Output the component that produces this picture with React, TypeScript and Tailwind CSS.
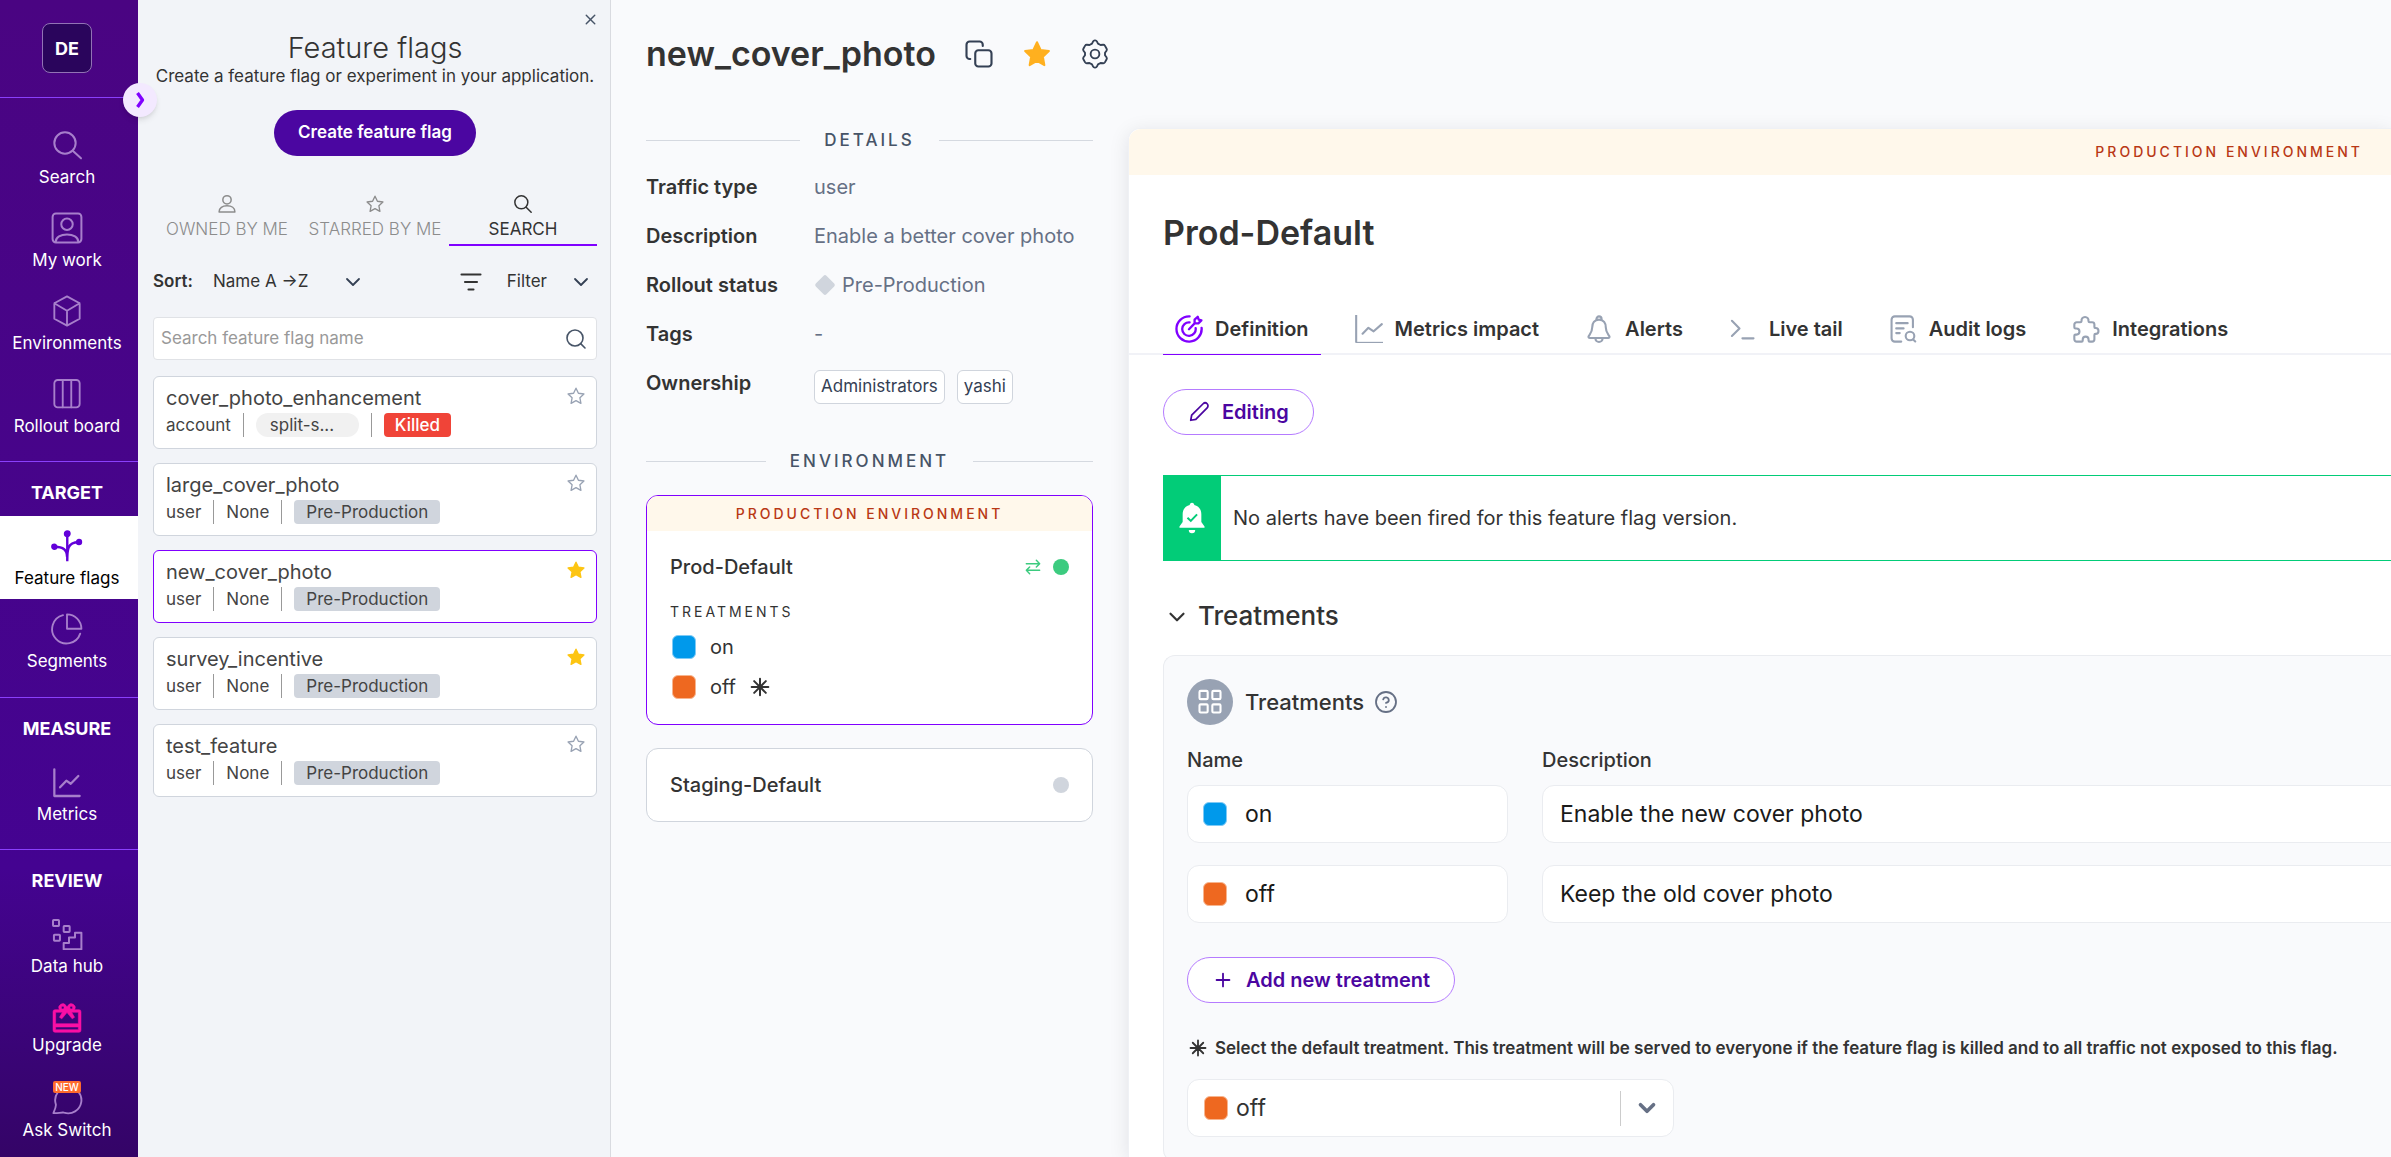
import type { ReactNode } from "react";
import { ChevronDown, Plus, Search, X } from "lucide-react";

type IconProps = { className?: string; children?: ReactNode; box?: string; width?: number };

function Icon({ className = "size-8", children, box = "0 0 24 24", width = 1.5 }: IconProps) {
  return (
    <svg
      className={className}
      viewBox={box}
      fill="none"
      stroke="currentColor"
      strokeWidth={width}
      strokeLinecap="round"
      strokeLinejoin="round"
      aria-hidden="true"
    >
      {children}
    </svg>
  );
}

const STAR = "M12 2.6l2.9 6.1 6.6.9-4.8 4.6 1.2 6.7-5.9-3.3-5.9 3.3 1.2-6.7L2.5 9.6l6.6-.9z";

function Star({ className, filled }: { className: string; filled?: boolean }) {
  return (
    <Icon className={className} width={1.6}>
      <path d={STAR} fill={filled ? "currentColor" : "none"} />
    </Icon>
  );
}

function Asterisk({ className = "size-5 text-[#333333]" }: { className?: string }) {
  return (
    <Icon className={className} width={2.4}>
      <path d="M12 2v20M2 12h20M5 5l14 14M19 5L5 19" />
    </Icon>
  );
}

function Swatch({ color }: { color: "blue" | "orange" }) {
  return (
    <span
      className={
        color === "blue"
          ? "size-6 shrink-0 rounded-md border border-[#7fcaf5] bg-[#0099eb]"
          : "size-6 shrink-0 rounded-md border border-[#f7b58f] bg-[#ee6820]"
      }
    />
  );
}

/* ---------- Navigation ---------- */

const navIcon = "size-8 text-[#a77fcb]";

function NavItem({ label, icon, active }: { label: string; icon: ReactNode; active?: boolean }) {
  return (
    <a
      href="#"
      aria-current={active ? "page" : undefined}
      className={
        active
          ? "flex h-[83px] flex-col items-center bg-white pt-3.5 pr-1 text-black"
          : "flex h-[83px] flex-col items-center pt-3.5 pr-1 text-white"
      }
    >
      {icon}
      <span className="mt-1 text-[17px] leading-6">{label}</span>
    </a>
  );
}

function NavHeading({ children }: { children: ReactNode }) {
  return (
    <h2 className="border-t border-[#8a3ffc] pt-[19px] pr-1 pb-[11px] text-center text-[18px] leading-6 font-bold text-white">
      {children}
    </h2>
  );
}

function Sidebar() {
  return (
    <nav
      aria-label="Main"
      className="relative z-10 w-[138px] shrink-0 bg-linear-to-b from-[#4a0482] via-[#440391] via-75% to-[#340467]"
    >
      <div className="flex h-[98px] items-start justify-center border-b border-[#8a3ffc] pt-[23px]">
        <button
          type="button"
          className="mr-1 size-[50px] rounded-lg border border-[#9273b5] bg-[#2a055c] text-[18px] font-bold text-white"
        >
          DE
        </button>
      </div>
      <button
        type="button"
        aria-label="Expand navigation"
        className="absolute top-[83px] left-[123px] flex size-[34px] items-center justify-center rounded-full bg-[#f3e9ff] text-[#8000ff] shadow-md"
      >
        <Icon className="size-5" width={4}>
          <path d="M9 3.500l6 8.500-6 8.500" strokeLinecap="butt" />
        </Icon>
      </button>

      <div className="pt-[17px] pb-3.5">
        <NavItem label="Search" icon={<Icon className={navIcon}><circle cx="10.500" cy="10.500" r="8" /><path d="M16.300 16.300L22.500 22" /></Icon>} />
        <NavItem
          label="My work"
          icon={
            <Icon className={navIcon}>
              <rect x="1.200" y="1.200" width="21.600" height="21.600" rx="2.500" />
              <circle cx="12" cy="9.200" r="4.300" />
              <path d="M3.500 22.500c0-3.500 3.800-5.700 8.500-5.700s8.500 2.200 8.500 5.700" />
            </Icon>
          }
        />
        <NavItem
          label="Environments"
          icon={
            <Icon className={navIcon} width={1.4}>
              <path d="M12 1l9.500 5.200v11.600L12 23l-9.500-5.200V6.200zM2.500 6.200L12 11.800l9.500-5.600M12 11.800V23" />
            </Icon>
          }
        />
        <NavItem
          label="Rollout board"
          icon={
            <Icon className={navIcon} width={1.4}>
              <rect x="2.500" y="1.500" width="19" height="20.500" rx="2.500" />
              <path d="M8.800 1.500V22M15.200 1.500V22" />
            </Icon>
          }
        />
      </div>
      <NavHeading>TARGET</NavHeading>
      <div className="pb-[15px]">
        <NavItem
          active
          label="Feature flags"
          icon={
            <Icon className="size-8 text-[#6200d9]" width={1.8}>
              <path d="M12.200 3v20.500M12.200 23c0-8 0-13.800 8.500-13.800M12 20c0-5-2.500-7.400-9.500-7.400" strokeLinecap="butt" />
              <circle cx="12.200" cy="2.800" r="1.700" fill="currentColor" />
              <circle cx="21" cy="9" r="1.500" fill="currentColor" />
              <circle cx="2.500" cy="12.600" r="1.500" fill="currentColor" />
            </Icon>
          }
        />
        <NavItem
          label="Segments"
          icon={
            <Icon className={navIcon} width={1.4}>
              <path d="M9 1.600A10.800 10.800 0 1 0 21.900 15.500M12 1a10.800 10.800 0 0 1 10.800 10.800H12z" />
            </Icon>
          }
        />
      </div>
      <NavHeading>MEASURE</NavHeading>
      <div className="pb-3.5">
        <NavItem
          label="Metrics"
          icon={
            <Icon className={navIcon} width={1.7}>
              <path d="M2.500 2.500v20h19M6.800 16l4.700-5 3.300 2.300 5.700-5.800" />
            </Icon>
          }
        />
      </div>
      <NavHeading>REVIEW</NavHeading>
      <NavItem
        label="Data hub"
        icon={
          <Icon className={navIcon} width={1.5}>
            <rect x="1.500" y="1.500" width="4.500" height="4.500" rx=".5" />
            <rect x="9.500" y="6" width="4.500" height="4.500" rx=".5" />
            <rect x="2.200" y="12.500" width="4.500" height="4.500" rx=".5" />
            <path d="M22.800 11v12.500H9.500v-4.800h4v-4h4.500V11z" />
          </Icon>
        }
      />
      <a href="#" className="flex h-[83px] flex-col items-center pt-3.5 pr-1 text-white">
        <svg className="size-8 text-[#fa0fa5]" viewBox="0 0 24 24" fill="currentColor" stroke="currentColor" strokeWidth=".4" aria-hidden="true">
          <path d="M21 6.500h-3.300a2.900 2.900 0 0 0-5-3.100L12 4.300l-.7-.9a2.900 2.900 0 0 0-5 3.100H3A1.500 1.500 0 0 0 1.500 8v14A1.500 1.500 0 0 0 3 23.500h18a1.500 1.500 0 0 0 1.500-1.500V8A1.500 1.500 0 0 0 21 6.500zM15.200 4a1 1 0 1 1 0 2 1 1 0 0 1 0-2zM8.800 4a1 1 0 1 1 0 2 1 1 0 0 1 0-2zM20.500 21.500h-17v-2h17zm0-4.500h-17V8.500h5l-2.200 3.700 1.800 1.200L12 8.700l3.900 4.700 1.800-1.200-2.200-3.700h5z" />
        </svg>
        <span className="text-[17px] leading-6">Upgrade</span>
      </a>
      <a href="#" className="flex flex-col items-center pr-1 text-white">
        <span className="relative flex h-[46px] justify-center pt-3.5">
          <Icon className={navIcon} width={1.4}>
            <path d="M12.800 2.200a9.900 9.900 0 1 1-3 19.300c-1.200-.5-5.600.7-8 .3 1-2.200 2.200-4.700 1.800-6.600A10 10 0 0 1 12.800 2.200z" />
          </Icon>
          <span className="absolute top-[11px] rounded-xs bg-[#ff6b2c] px-0.5 text-[10px] leading-3 font-medium text-white">
            NEW
          </span>
        </span>
        <span className="mt-0.5 text-[17px] leading-6">Ask Switch</span>
      </a>
    </nav>
  );
}

/* ---------- Feature flag list ---------- */

type Flag = { name: string; type: string; tag: string; status: "Killed" | "Pre-Production"; starred?: boolean; active?: boolean };

const flags: Flag[] = [
  { name: "cover_photo_enhancement", type: "account", tag: "split-s...", status: "Killed" },
  { name: "large_cover_photo", type: "user", tag: "None", status: "Pre-Production" },
  { name: "new_cover_photo", type: "user", tag: "None", status: "Pre-Production", starred: true, active: true },
  { name: "survey_incentive", type: "user", tag: "None", status: "Pre-Production", starred: true },
  { name: "test_feature", type: "user", tag: "None", status: "Pre-Production" },
];

function FlagCard({ flag }: { flag: Flag }) {
  return (
    <li
      className={
        flag.active
          ? "flex h-[73px] justify-between rounded-md border border-[#8000ff] bg-white pt-[7px] pr-2.5 pl-3"
          : "flex h-[73px] justify-between rounded-md border border-[#d0d5dd] bg-white pt-[7px] pr-2.5 pl-3"
      }
    >
      <div>
        <a href="#" className="block text-[20px] leading-7 text-[#444444]">{flag.name}</a>
        <div className="mt-px flex h-6 items-center gap-3 text-[17px] leading-6 text-[#444444]">
          <span>{flag.type}</span>
          <span className="h-6 w-px bg-[#999999]" />
          {flag.status === "Killed" ? (
            <span className="w-[103px] rounded-full bg-[#f1f1f1] pl-3.5">{flag.tag}</span>
          ) : (
            <span>{flag.tag}</span>
          )}
          <span className="h-6 w-px bg-[#999999]" />
          {flag.status === "Killed" ? (
            <span className="rounded-sm bg-[#f04438] px-[11px] font-medium text-white">Killed</span>
          ) : (
            <span className="rounded-sm bg-[#d0d5dd] px-3">Pre-Production</span>
          )}
        </div>
      </div>
      <button type="button" aria-label={`Star ${flag.name}`} className="h-5">
        <Star filled={flag.starred} className={flag.starred ? "mt-0.5 size-5 text-[#fdc513]" : "mt-0.5 size-5 text-[#98a2b3]"} />
      </button>
    </li>
  );
}

function FlagPanel() {
  return (
    <aside className="flex w-[473px] shrink-0 flex-col border-r border-[#d9dbe0] bg-[#f2f4f8] pr-[13px] pl-[15px] text-[#333333]">
      <div className="flex h-8 items-end justify-end pb-1">
        <button type="button" aria-label="Close panel">
          <X className="-mr-0.5 size-[17px] text-[#475467]" />
        </button>
      </div>
      <div className="text-center">
        <h1 className="text-[29px] leading-8 font-light">Feature flags</h1>
        <p className="text-[17px] leading-6 whitespace-nowrap">Create a feature flag or experiment in your application.</p>
        <button type="button" className="mt-[22px] h-[46px] rounded-full bg-[#4b06a1] px-6 text-[17px] font-semibold text-white">
          Create feature flag
        </button>
      </div>

      <div role="tablist" aria-label="Flag lists" className="mt-[38px] grid grid-cols-3 text-[17px] leading-6 font-light whitespace-nowrap">
        <button type="button" role="tab" aria-selected="false" className="flex flex-col items-center gap-[3px] border-b-2 border-transparent pb-[3px] text-[#8c8c8c]">
          <Icon className="size-5" width={1.8}>
            <circle cx="12" cy="7" r="5" />
            <path d="M2.500 21.500c0-5 4-7.300 9.500-7.300s9.500 2.300 9.500 7.300z" />
          </Icon>
          OWNED BY ME
        </button>
        <button type="button" role="tab" aria-selected="false" className="flex flex-col items-center gap-[3px] border-b-2 border-transparent pb-[3px] text-[#8c8c8c]">
          <Star className="size-5" />
          STARRED BY ME
        </button>
        <button type="button" role="tab" aria-selected="true" className="flex flex-col items-center gap-[3px] border-b-2 border-[#8000ff] pb-[3px] font-normal">
          <Icon className="size-5" width={1.8}>
            <circle cx="10" cy="10" r="7.800" />
            <path d="M15.800 15.800l6 6" />
          </Icon>
          SEARCH
        </button>
      </div>

      <div className="mt-[22px] flex h-7 items-center text-[17px]">
        <label htmlFor="sort" className="w-[60px] font-semibold">Sort:</label>
        <div className="relative flex items-center">
          <select id="sort" className="w-[152px] appearance-none bg-transparent">
            <option>Name A →Z</option>
            <option>Name Z →A</option>
          </select>
          <ChevronDown className="pointer-events-none absolute right-0 size-6 text-[#344054]" strokeWidth={1.8} />
        </div>
        <button type="button" className="ml-auto flex items-center pr-1">
          <Icon className="size-6" width={2.1}>
            <path d="M2.500 4.500h19M6 12h12M9.500 19.500h5" />
          </Icon>
          <span className="ml-6">Filter</span>
          <ChevronDown className="ml-[22px] size-6 text-[#344054]" strokeWidth={1.8} />
        </button>
      </div>

      <div className="mt-[21px] flex h-[43px] shrink-0 items-center rounded-sm border border-[#e0e2e6] bg-white pr-2 pl-[7px]">
        <input
          type="text"
          aria-label="Search feature flag name"
          placeholder="Search feature flag name"
          className="w-full bg-transparent text-[17px] outline-none placeholder:text-[#999999]"
        />
        <Search className="size-6 shrink-0 text-[#475467]" strokeWidth={1.6} />
      </div>

      <ul className="mt-4 flex flex-col gap-3.5">
        {flags.map((flag) => (
          <FlagCard key={flag.name} flag={flag} />
        ))}
      </ul>
    </aside>
  );
}

/* ---------- Details column ---------- */

function SectionRule({ children }: { children: ReactNode }) {
  return (
    <div className="flex h-6 items-center gap-6">
      <span className="h-px flex-1 bg-[#d5d9e0]" />
      <h2 className="text-[17px] leading-6 font-medium tracking-[3px] text-[#475467]">{children}</h2>
      <span className="h-px flex-1 bg-[#d5d9e0]" />
    </div>
  );
}

function DetailRow({ label, children }: { label: string; children: ReactNode }) {
  return (
    <div className="flex h-[49px] items-center">
      <dt className="w-[168px] font-semibold text-[#333333]">{label}</dt>
      <dd className="flex items-center text-[#667085]">{children}</dd>
    </div>
  );
}

function DetailsColumn() {
  return (
    <section className="w-[447px] shrink-0">
      <SectionRule>DETAILS</SectionRule>
      <dl className="mt-2.5 text-[20px] whitespace-nowrap">
        <DetailRow label="Traffic type">user</DetailRow>
        <DetailRow label="Description">Enable a better cover photo</DetailRow>
        <DetailRow label="Rollout status">
          <svg className="mr-1.5 size-[22px] text-[#d0d5dd]" viewBox="0 0 22 22" aria-hidden="true">
            <rect x="3.500" y="3.500" width="15" height="15" rx="2" fill="currentColor" transform="rotate(45 11 11)" />
          </svg>
          Pre-Production
        </DetailRow>
        <DetailRow label="Tags">-</DetailRow>
        <DetailRow label="Ownership">
          <span className="flex gap-3 pt-2 text-[17px] text-[#344054]">
            <span className="flex h-[34px] items-center rounded-md border border-[#d0d5dd] bg-white px-1.5">Administrators</span>
            <span className="flex h-[34px] items-center rounded-md border border-[#d0d5dd] bg-white px-1.5">yashi</span>
          </span>
        </DetailRow>
      </dl>

      <div className="mt-[42px]">
        <SectionRule>ENVIRONMENT</SectionRule>
      </div>

      <div className="mt-[22px] h-[230px] overflow-hidden rounded-xl border border-[#8000ff] bg-white text-[#333333]">
        <p className="bg-[#fff8eb] text-center text-[14px] leading-[35px] font-medium tracking-[3px] text-[#b93815]">
          PRODUCTION ENVIRONMENT
        </p>
        <div className="px-[23px]">
          <div className="mt-6 flex items-center">
            <h3 className="text-[20px] leading-6 font-medium">Prod-Default</h3>
            <Icon className="ml-auto size-4 text-[#3ccb7f]" width={2.2}>
              <path d="M2 7h20M17 2l5 5-5 5M22 17H2M7 12l-5 5 5 5" />
            </Icon>
            <span className="ml-3 size-4 rounded-full bg-[#3ccb7f]" />
          </div>
          <h4 className="mt-[21px] text-[14px] leading-6 tracking-[3px]">TREATMENTS</h4>
          <ul className="mt-[11px] flex flex-col gap-4 pl-0.5 text-[20px]">
            <li className="flex h-6 items-center gap-3.5"><Swatch color="blue" />on</li>
            <li className="flex h-6 items-center gap-3.5"><Swatch color="orange" />off<Asterisk /></li>
          </ul>
        </div>
      </div>

      <div className="mt-[23px] flex h-[74px] items-center justify-between rounded-xl border border-[#d0d5dd] bg-white px-[23px]">
        <h3 className="text-[20px] font-medium text-[#333333]">Staging-Default</h3>
        <span className="size-4 rounded-full bg-[#d0d5dd]" />
      </div>
    </section>
  );
}

/* ---------- Environment panel ---------- */

const tabIcon = "size-7 shrink-0 text-[#98a2b3]";

const tabs: { label: string; icon: ReactNode; active?: boolean }[] = [
  {
    label: "Definition",
    active: true,
    icon: (
      <Icon className="size-7 shrink-0 text-[#8000ff]" width={2}>
        <path d="M12.500 1.200A10.800 10.800 0 1 0 22.800 11M12.500 6.300a5.800 5.800 0 1 0 5.200 4.900M12 12.200l5-5.200M16.800 7.200V4l2.700-2.500.8 2.400 2.300.7L20 7.200z" />
      </Icon>
    ),
  },
  {
    label: "Metrics impact",
    icon: (
      <Icon className={tabIcon} width={1.8}>
        <path d="M1 0v23.500" strokeLinecap="butt" />
        <path d="M.5 23.500H24" strokeWidth={1} strokeLinecap="butt" />
        <path d="M6.500 16l5-5 4.500 3L23 7.800" />
      </Icon>
    ),
  },
  {
    label: "Alerts",
    icon: (
      <Icon className={tabIcon} width={1.8}>
        <path d="M9.800 4.200V3.400a2.200 2.200 0 0 1 4.400 0v.8M12 4c-4 0-5.800 3-5.800 6.500 0 4-1.700 5.500-3 7.500-.6 1 0 1.700 1 1.700h15.600c1 0 1.600-.7 1-1.700-1.300-2-3-3.500-3-7.500C17.800 7 16 4 12 4zM9 20.500a3 2.600 0 0 0 6 0" />
      </Icon>
    ),
  },
  { label: "Live tail", icon: <Icon className={tabIcon} width={1.8}><path d="M2.500 5l6.500 6.500L2.500 18M11.500 20H21" /></Icon> },
  {
    label: "Audit logs",
    icon: (
      <Icon className={tabIcon} width={1.8}>
        <path d="M20.500 10.500V4A2.800 2.800 0 0 0 17.700 1.200H5A2.800 2.800 0 0 0 2.200 4v16A2.800 2.800 0 0 0 5 22.800h5.500M6.200 7H16M6.200 11.500h6.300M6.200 15.500h3M20.700 21l1.800 1.700" />
        <circle cx="18" cy="18" r="3.700" />
      </Icon>
    ),
  },
  {
    label: "Integrations",
    icon: (
      <Icon className={tabIcon} width={1.8}>
        <path d="M8.200 5.200a3 3 0 1 1 5.900 0c0 .7.500 1 1.200 1h1.900a2 2 0 0 1 2 2v2c0 .600.400 1 1 1a2.500 2.500 0 0 1 0 5c-.6 0-1 .4-1 1v3.600a2 2 0 0 1-2 2h-2c-.7 0-1-.5-1-1v-.8a2.500 2.500 0 0 0-5 0v.8c0 .5-.4 1-1 1H4a2 2 0 0 1-2-2v-3c0-.700.400-1 1-1h.800a2.600 2.600 0 0 0 0-5.200H3c-.6 0-1-.4-1-1V8.200a2 2 0 0 1 2-2h3c.7 0 1.200-.3 1.200-1z" />
      </Icon>
    ),
  },
];

const field = "flex h-[58px] items-center rounded-xl border border-[#eaecf0] bg-white";

function TreatmentRow({ color, name, description }: { color: "blue" | "orange"; name: string; description: string }) {
  return (
    <>
      <div className={`${field} pl-[15px]`}>
        <Swatch color={color} />
        <input type="text" aria-label={`Name of treatment ${name}`} defaultValue={name} className="ml-[18px] w-full bg-transparent text-[23px] outline-none" />
      </div>
      <div className={`${field} -mr-12 pl-[17px]`}>
        <input type="text" aria-label={`Description of treatment ${name}`} defaultValue={description} className="w-full bg-transparent text-[23px] outline-none" />
      </div>
    </>
  );
}

function EnvironmentPanel() {
  return (
    <section className="ml-[35px] flex min-w-0 flex-1 flex-col rounded-tl-xl border-t border-l border-[#eff1f5] bg-white text-[#333333] shadow-[0_4px_20px_rgba(16,24,40,0.10)]">
      <p className="rounded-tl-xl bg-[#fff8eb] pr-7 text-right text-[14px] leading-[46px] font-medium tracking-[3px] text-[#b93815]">
        PRODUCTION ENVIRONMENT
      </p>
      <h2 className="mt-[35px] pl-[34px] text-[34px] leading-[46px] font-semibold">Prod-Default</h2>

      <div role="tablist" aria-label="Flag sections" className="mt-[47px] flex h-[52px] gap-[22px] border-b-2 border-[#f1f2f7] pl-[34px]">
        {tabs.map((tab) => (
          <button
            key={tab.label}
            type="button"
            role="tab"
            aria-selected={!!tab.active}
            className={
              tab.active
                ? "-mb-0.5 flex h-[52px] items-center gap-3 border-b border-[#8000ff] px-3 text-[20px] font-semibold whitespace-nowrap"
                : "-mb-0.5 flex h-[52px] items-center gap-3 border-b border-transparent px-3 text-[20px] font-semibold whitespace-nowrap"
            }
          >
            {tab.icon}
            {tab.label}
          </button>
        ))}
      </div>

      <div className="pl-[34px]">
        <button type="button" className="mt-[34px] flex h-[46px] items-center gap-3 rounded-full border border-[#b57bff] px-6 text-[20px] font-semibold text-[#4b06a1]">
          <Icon className="size-[22px]" width={1.9}>
            <path d="M3 21l1-5.500L16.500 3a3 3 0 0 1 4.400 4.400L8.500 20z" />
          </Icon>
          Editing
        </button>

        <div role="status" className="mt-10 flex h-[86px] items-center border-y border-[#02cc78] text-[20px]">
          <span className="-my-px flex h-[86px] w-[58px] shrink-0 items-center justify-center bg-[#02cc78]">
            <svg className="size-8" viewBox="0 0 24 24" fill="#fff" aria-hidden="true">
              <path d="M12 .5c1 0 1.700.700 1.700 1.700 3.400.8 5.300 3.600 5.300 7V15l2.400 3.400v1H2.600v-1L5 15V9.200c0-3.400 1.900-6.200 5.300-7 0-1 .7-1.700 1.700-1.700zM9.600 21h4.800a2.400 2.400 0 0 1-4.800 0z" />
              <path d="M8.600 11.800l2.500 2.400 4.700-4.900" fill="none" stroke="#02cc78" strokeWidth="1.500" />
            </svg>
          </span>
          <p className="pl-3">No alerts have been fired for this feature flag version.</p>
        </div>

        <button type="button" aria-expanded="true" className="mt-[39px] flex h-8 items-center gap-2 text-[26px] leading-8 font-medium">
          <ChevronDown className="ml-px size-[26px] translate-y-px" strokeWidth={2} />
          Treatments
        </button>

        <div className="mt-[23px] rounded-tl-xl rounded-bl-xl border border-r-0 border-[#eaecf0] bg-[#f9fafc] px-[23px] pt-[23px] pb-6">
          <div className="flex items-center">
            <span className="flex size-[46px] items-center justify-center rounded-full bg-[#98a2b3] text-white">
              <Icon className="size-7" width={1.8}>
                <rect x="3" y="2.500" width="7" height="7" rx="1" />
                <rect x="14" y="2.500" width="7" height="7" rx="1" />
                <rect x="3" y="14" width="7" height="7" rx="1" />
                <rect x="14" y="14" width="7" height="7" rx="1" />
              </Icon>
            </span>
            <h3 className="ml-3 text-[22px] leading-7 font-medium">Treatments</h3>
            <button type="button" aria-label="About treatments" className="ml-2.5">
              <Icon className="size-6 text-[#667085]" width={1.8}>
                <circle cx="12" cy="12" r="10" />
                <path d="M9.200 9.300a2.900 2.900 0 0 1 5.600.9c0 1.900-2.800 2.700-2.800 2.700M12 17h.01" />
              </Icon>
            </button>
          </div>

          <div className="mt-[21px] grid grid-cols-[321px_1fr] gap-x-[34px] text-[20px] leading-7 font-medium">
            <span>Name</span>
            <span>Description</span>
          </div>
          <div className="mt-[11px] grid grid-cols-[321px_1fr] gap-x-[34px] gap-y-[22px] text-[#1a1a1a]">
            <TreatmentRow color="blue" name="on" description="Enable the new cover photo" />
            <TreatmentRow color="orange" name="off" description="Keep the old cover photo" />
          </div>

          <button type="button" className="mt-[34px] flex h-[46px] items-center gap-3 rounded-full border border-[#b57bff] bg-white px-6 text-[20px] font-semibold text-[#4b06a1]">
            <Plus className="size-[22px]" strokeWidth={2} />
            Add new treatment
          </button>

          <label htmlFor="default-treatment" className="mt-[33px] flex items-center gap-2 pl-0.5 text-[17px] leading-6 font-semibold whitespace-nowrap">
            <Asterisk className="size-[18px] shrink-0 text-[#333333]" />
            Select the default treatment. This treatment will be served to everyone if the feature flag is killed and to all traffic not exposed to this flag.
          </label>

          <div className={`${field} relative mt-[19px] max-w-[487px] pl-4`}>
            <Swatch color="orange" />
            <select id="default-treatment" className="w-full appearance-none bg-transparent pl-2 text-[23px] text-[#333333] outline-none">
              <option>off</option>
              <option>on</option>
            </select>
            <span className="pointer-events-none flex h-[35px] w-[53px] shrink-0 items-center justify-center border-l border-[#cccccc]">
              <ChevronDown className="size-[26px] text-[#667085]" strokeWidth={3.4} />
            </span>
          </div>
        </div>
      </div>
    </section>
  );
}

export default function App() {
  return (
    <div className="flex h-screen overflow-hidden bg-[#f9fafc] font-['Inter',sans-serif]">
      <Sidebar />
      <FlagPanel />
      <main className="flex min-w-0 flex-1 flex-col pl-[35px]">
        <header className="flex h-[128px] shrink-0 items-start gap-7 pt-7 text-[#344054]">
          <h1 className="text-[34px] leading-[52px] font-semibold text-[#333333]">new_cover_photo</h1>
          <div className="flex h-[52px] items-center gap-7">
            <button type="button" aria-label="Copy">
              <Icon className="size-[30px]" width={1.7}>
                <path d="M5 16H4.500A2.500 2.500 0 0 1 2 13.500v-9A2.500 2.500 0 0 1 4.500 2h8A2.500 2.500 0 0 1 15 4.500V5.500" />
                <rect x="9" y="9" width="13" height="13" rx="2.500" />
              </Icon>
            </button>
            <button type="button" aria-label="Starred">
              <Star filled className="size-[30px] text-[#ffb01f]" />
            </button>
            <button type="button" aria-label="Settings">
              <Icon className="size-[30px]" width={1.5}>
                <path d="M9.600 3.700 10.500 1.900a1.500 1.500 0 0 1 1.300-.8h.4a1.500 1.500 0 0 1 1.300.8l.9 1.800 2 1.100 2.100-.2a1.500 1.500 0 0 1 1.400.7l1.400 2.500a1.500 1.500 0 0 1-.1 1.600L20 11v2l1.200 1.600a1.500 1.500 0 0 1 .1 1.600l-1.400 2.500a1.500 1.500 0 0 1-1.400.7l-2.100-.2-2 1.100-.9 1.800a1.500 1.500 0 0 1-1.300.8h-.4a1.500 1.500 0 0 1-1.300-.8l-.9-1.800-2-1.100-2.100.2a1.500 1.500 0 0 1-1.400-.7l-1.400-2.500a1.500 1.500 0 0 1 .1-1.600L4 13v-2L2.800 9.400a1.500 1.500 0 0 1-.1-1.600l1.400-2.500a1.500 1.500 0 0 1 1.400-.7l2.100.2z" />
                <circle cx="12" cy="12" r="3.500" />
              </Icon>
            </button>
          </div>
        </header>
        <div className="flex min-h-0 flex-1">
          <DetailsColumn />
          <EnvironmentPanel />
        </div>
      </main>
    </div>
  );
}
